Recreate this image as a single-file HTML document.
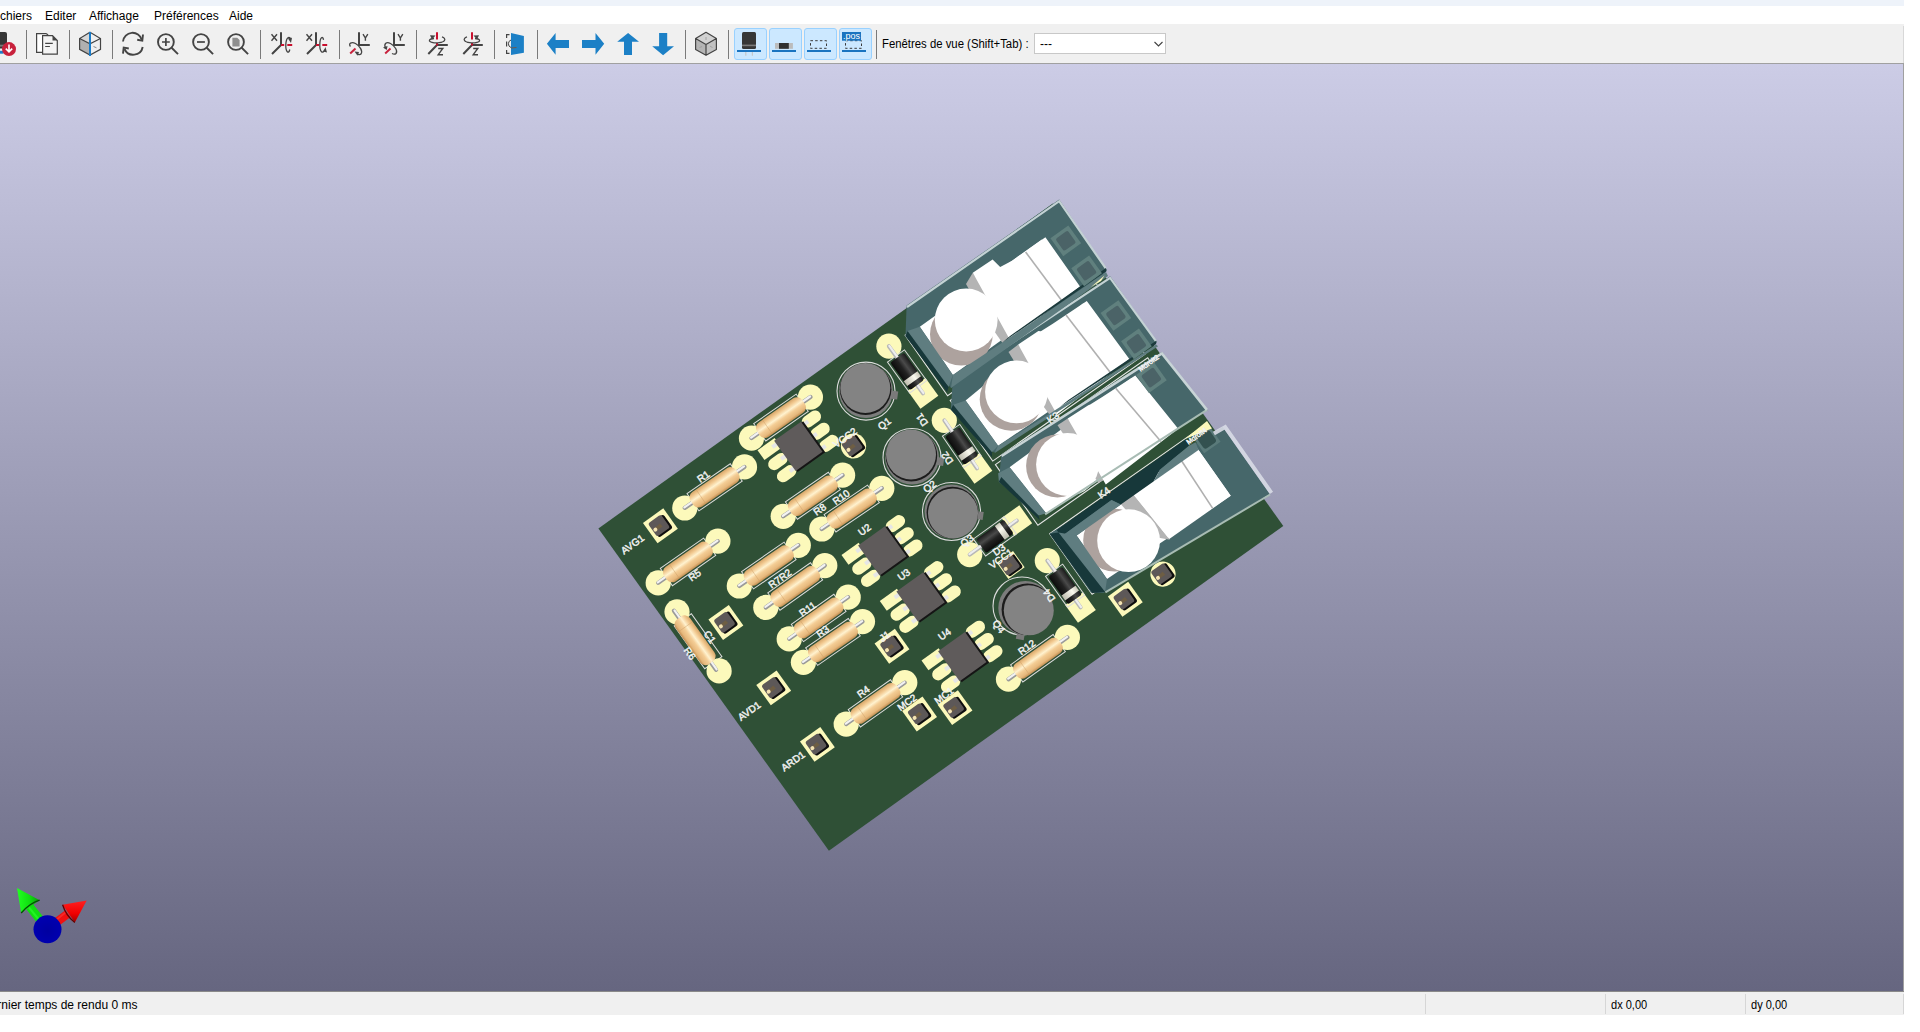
<!DOCTYPE html>
<html><head><meta charset="utf-8">
<style>
html,body{margin:0;padding:0;width:1920px;height:1032px;overflow:hidden;background:#fff;font-family:"Liberation Sans",sans-serif;color:#000}
.abs{position:absolute}
#strip{left:0;top:0;width:1904px;height:6px;background:#eef3fa}
#menu{left:0;top:6px;width:1904px;height:18px;background:#fff;font-size:12px}
#menu span{position:absolute;top:3px;white-space:nowrap}
#tb{left:0;top:24px;width:1904px;height:39px;background:#f0f0f0}
#tbline{left:0;top:63px;width:1904px;height:1px;background:#a0a0a0}
.sep{position:absolute;top:30px;width:1px;height:29px;background:#7a7a7a}
.tog{position:absolute;top:28px;width:31px;height:30px;background:#cce8ff;border:1px solid #99d1ff;border-radius:3px}
#vp{left:0;top:64px;width:1903px;height:927px;background:linear-gradient(#cccce6,#666680)}
#vpr{left:1903px;top:64px;width:1px;height:928px;background:#a0a0a0}
#tbr{left:1903px;top:26px;width:1px;height:37px;background:#d8d8d8}
#vpb{left:0;top:991px;width:1904px;height:1px;background:#8a8a8a}
#sb{left:0;top:992px;width:1904px;height:23px;background:#f0f0f0;font-size:12px}
.ssep{position:absolute;top:2px;width:1px;height:20px;background:#d6d6d6}
svg{position:absolute;overflow:visible}
</style></head><body>
<div class="abs" id="strip"></div>
<div class="abs" id="menu">
<span style="left:0px">chiers</span>
<span style="left:45px">Editer</span>
<span style="left:89px">Affichage</span>
<span style="left:154px">Préférences</span>
<span style="left:229px">Aide</span>
</div>
<div class="abs" id="tb"></div>
<div class="abs" id="tbline"></div>
<div class="sep" style="left:26px"></div>
<div class="sep" style="left:69px"></div>
<div class="sep" style="left:112px"></div>
<div class="sep" style="left:260px"></div>
<div class="sep" style="left:339px"></div>
<div class="sep" style="left:416px"></div>
<div class="sep" style="left:494px"></div>
<div class="sep" style="left:537px"></div>
<div class="sep" style="left:685px"></div>
<div class="sep" style="left:728px"></div>
<div class="sep" style="left:876px"></div>
<div class="tog" style="left:734px"></div>
<div class="tog" style="left:769px"></div>
<div class="tog" style="left:804px"></div>
<div class="tog" style="left:839px"></div>
<div class="abs" style="left:882px;top:37px;font-size:12px;white-space:nowrap;transform:scaleX(0.945);transform-origin:0 0">Fenêtres de vue (Shift+Tab) :</div>
<div class="abs" style="left:1034px;top:33px;width:132px;height:21px;background:#fff;border:1px solid #c8c8c8;box-sizing:border-box"></div>
<div class="abs" style="left:1040px;top:37px;font-size:12px">---</div>
<svg width="1920" height="64" style="left:0;top:0" viewBox="0 0 1920 64">
<g stroke-linecap="butt" fill="none">
<!-- printer export -->
<path d="M-4 32 H5 Q7 32 7 34 V48.5 H-4 Z" fill="#363636"/>
<rect x="-4" y="44.7" width="11" height="1.9" fill="#777"/>
<rect x="-4" y="50.8" width="7.5" height="2.9" fill="#1f7dc8"/>
<circle cx="9" cy="49.1" r="7" fill="#c8213c"/>
<path d="M9 44.5 V51.5 M5.8 48.6 L9 51.9 L12.2 48.6" stroke="#fff" stroke-width="1.6"/>
<!-- copy -->
<path d="M46.5 33.6 H36.6 V52.4 H42.5 M46.5 33.6 L48.2 35.5" stroke="#444" stroke-width="1.2" fill="#fff"/>
<path d="M42.6 35.6 H52.5 L57.3 40.5 V54.2 H42.6 Z" stroke="#444" stroke-width="1.2" fill="#f4f4f4"/>
<path d="M52.5 35.6 V40.5 H57.3 Z" fill="#444"/>
<path d="M45.2 43.4 H52.8 M45.2 46.5 H49.9" stroke="#444" stroke-width="1.1"/>
<!-- cube blue line -->
<path d="M90 32.3 L79.6 38.5 L90 43.8 Z" fill="#d8d8d8"/>
<path d="M79.6 38.5 L90 43.8 L90 55 L79.6 49.4 Z" fill="#b0b0b0"/>
<path d="M90 32.3 L100.5 38.5 L100.5 49.4 L90 55 L79.6 49.4 L79.6 38.5 Z M79.6 38.5 L90 43.8 L100.5 38.5" stroke="#444" stroke-width="1.2"/>
<path d="M93.5 46.5 L96.5 47.8" stroke="#888" stroke-width="1"/>
<path d="M90 32 V56" stroke="#1a7cc9" stroke-width="2"/>
<!-- refresh -->
<path d="M123 41.5 A9.6 9.6 0 0 1 141.8 39.8" stroke="#444" stroke-width="1.9"/>
<path d="M143 34.5 L142.3 40.6 L137.2 39.8" stroke="#444" stroke-width="1.9"/>
<path d="M142.7 47 A9.6 9.6 0 0 1 124.5 49" stroke="#444" stroke-width="1.9"/>
<path d="M123 53.7 L123.7 47.6 L128.8 48.5" stroke="#444" stroke-width="1.9"/>
<!-- zoom in/out/fit -->
<g stroke="#444" stroke-width="1.9">
<circle cx="165.9" cy="42" r="7.9"/><path d="M171.6 47.8 L178 54.1"/><path d="M162 42 H169.8 M165.9 38.1 V45.9" stroke-width="1.7"/>
<circle cx="201" cy="42" r="7.9"/><path d="M206.7 47.8 L213.1 54.1"/><path d="M197 42 H204.9" stroke-width="1.7"/>
<circle cx="236" cy="42" r="7.9"/><path d="M241.7 47.8 L248.1 54.1"/>
</g>
<path d="M232.4 37.7 H237.2 L239.6 40 V46.4 H232.4 Z" fill="#8e8e8e"/>
<!-- rotate X -->
<g id="rx">
<path d="M281 32.2 V45 L272 54" stroke="#444" stroke-width="2"/>
<path d="M271.5 34.2 L277 40.7 M277 34.2 L271.5 40.7" stroke="#444" stroke-width="1.4"/>
<path d="M281 45 H284.2 M287.3 45 H292.2" stroke="#c8102e" stroke-width="1.9"/>
<path d="M290.8 39.4 C289.5 36 286.3 36.5 285.8 44.5 C285.5 52 288.8 54.5 289.8 49.5" stroke="#444" stroke-width="1.3"/>
<path d="M287.8 38.3 L292 37.8 L291 43" fill="#444"/>
</g>
<g transform="translate(35 0)">
<path d="M281 32.2 V45 L272 54" stroke="#444" stroke-width="2"/>
<path d="M271.5 34.2 L277 40.7 M277 34.2 L271.5 40.7" stroke="#444" stroke-width="1.4"/>
<path d="M281 45 H284.2 M287.3 45 H292.2" stroke="#c8102e" stroke-width="1.9"/>
<path d="M288.5 39.8 C288 36 285 36.5 284.8 44.5 C284.5 52 288 54.5 289.8 49.5" stroke="#444" stroke-width="1.3"/>
<path d="M288.3 51.5 L292 52.5 L290.5 47" fill="#444"/>
</g>
<!-- rotate Y -->
<g>
<path d="M359 32.2 V45 H369.8" stroke="#444" stroke-width="2"/>
<path d="M363 34.2 L365.4 38 L367.8 34.2 M365.4 38 V40.8" stroke="#444" stroke-width="1.4"/>
<path d="M350.2 53.5 L355.5 48.5" stroke="#c8213c" stroke-width="2"/>
<path d="M350.5 46.5 C348 43.5 351.5 41.5 355.5 43.5 C360 46 363 51 361 54 C360 55 358 54.5 357.5 54" stroke="#444" stroke-width="1.3"/>
<path d="M354.5 51.5 L359 52 L357.5 55.8 Z" fill="#444"/>
</g>
<g>
<path d="M394 32.2 V45 H404.8" stroke="#444" stroke-width="2"/>
<path d="M398 34.2 L400.4 38 L402.8 34.2 M400.4 38 V40.8" stroke="#444" stroke-width="1.4"/>
<path d="M385.2 53.5 L390.5 48.5" stroke="#c8213c" stroke-width="2"/>
<path d="M385.5 48 C383.5 43.5 386.5 41.5 390.5 43.5 C395 46 398 51 396 53.5 C395 54.5 393 54 392 53.5" stroke="#444" stroke-width="1.3"/>
<path d="M383 47.5 L387.5 46 L386.8 50 Z" fill="#444"/>
</g>
<!-- rotate Z -->
<g>
<path d="M437 45 H447.8 M437 45 L428.3 54" stroke="#444" stroke-width="2"/>
<path d="M437 32.2 V39.5 M437 43 V45.5" stroke="#c8102e" stroke-width="2"/>
<path d="M434 38.5 C428 39 428.5 41.5 432 42.3 C436 43.5 443 42.8 444.5 40.5 C445.5 39 444 37.5 442 36.8" stroke="#444" stroke-width="1.3"/>
<path d="M430 35.2 L435.5 35.5 L432 39.5 Z" fill="#444"/>
<path d="M438.2 48.5 H442.8 L438.2 54.7 H443" stroke="#444" stroke-width="1.4"/>
</g>
<g transform="translate(35 0)">
<path d="M437 45 H447.8 M437 45 L428.3 54" stroke="#444" stroke-width="2"/>
<path d="M437 32.2 V39.5 M437 43 V45.5" stroke="#c8102e" stroke-width="2"/>
<path d="M440 38.5 C446 39 445.5 41.5 442 42.3 C438 43.5 431 42.8 429.5 40.5 C428.5 39 430 37.5 432 36.8" stroke="#444" stroke-width="1.3"/>
<path d="M444 35.2 L438.5 35.5 L442 39.5 Z" fill="#444"/>
<path d="M438.2 48.5 H442.8 L438.2 54.7 H443" stroke="#444" stroke-width="1.4"/>
</g>
<!-- flip board -->
<path d="M511 33 L523.9 36.1 V52.8 L511 55 Z" fill="#1c80c6"/>
<path d="M509.5 34.7 H506.6 V38 M506.6 41.5 V46.5 M506.6 50 V53.3 H509.5" stroke="#444" stroke-width="1.2"/>
<path d="M511 40 A4 4 0 0 0 511 47.5" stroke="#444" stroke-width="1"/>
<path d="M511 48 L516.5 47.5" stroke="#6a5a50" stroke-width="1.2"/>
<!-- arrows -->
<path d="M546.9 43.8 L555.6 33.1 V40 H569 V48 H555.6 V54.7 Z" fill="#1c80c6"/>
<path d="M604.2 43.8 L595.5 33.1 V40 H582 V48 H595.5 V54.7 Z" fill="#1c80c6"/>
<path d="M628.1 33 L639 41.8 H632 V54.9 H624 V41.8 H617.2 Z" fill="#1c80c6"/>
<path d="M663.1 55.2 L674 46.3 H667.2 V33.1 H659.1 V46.3 H652.2 Z" fill="#1c80c6"/>
<!-- gray cube -->
<path d="M706 32.3 L716.4 38.5 L706 44.4 L695.6 38.5 Z" fill="#d2d2d2"/>
<path d="M695.6 38.5 L706 44.4 V55.3 L695.6 49.4 Z" fill="#b4b4b4"/>
<path d="M716.4 38.5 L706 44.4 V55.3 L716.4 49.4 Z" fill="#c2c2c2"/>
<path d="M706 32.3 L716.4 38.5 V49.4 L706 55.3 L695.6 49.4 V38.5 Z M695.6 38.5 L706 44.4 L716.4 38.5 M706 44.4 V55.3" stroke="#444" stroke-width="1.2" stroke-linejoin="round"/>
<path d="M706 37 V40 M699.5 47.5 L702 46.5 M710 46.2 L712.5 47.5" stroke="#999" stroke-width="0.8"/>
<!-- toggles -->
<rect x="742" y="31.9" width="14" height="17.1" rx="1.5" fill="#363636"/>
<rect x="742" y="44.6" width="14" height="1.6" fill="#7a7a7a"/>
<path d="M745.8 51 V55.8 M752.4 51 V55.8" stroke="#c8c8c8" stroke-width="1.2"/>
<rect x="737" y="50" width="24" height="2" fill="#1a74c0"/>
<rect x="775" y="43" width="17.9" height="5.8" fill="#bcbcbc"/>
<rect x="779" y="43" width="9.8" height="5.8" fill="#303030"/>
<rect x="772" y="50" width="24" height="2" fill="#1a74c0"/>
<rect x="810.5" y="40.7" width="16" height="7.6" stroke="#3a3a3a" stroke-width="1" stroke-dasharray="2.5 2.2"/>
<rect x="807" y="50" width="24" height="2" fill="#1a74c0"/>
<rect x="845.5" y="40.7" width="16" height="7.6" stroke="#3a3a3a" stroke-width="1" stroke-dasharray="2.5 2.2"/>
<rect x="842" y="32" width="19" height="8.7" fill="#1a74c0"/>
<text x="851.5" y="39.3" font-family="Liberation Sans" font-size="9" fill="#fff" text-anchor="middle">.pos</text>
<rect x="842" y="50" width="24" height="2" fill="#1a74c0"/>
<!-- combo arrow -->
<path d="M1154.5 42 L1158.5 46 L1162.5 42" stroke="#404040" stroke-width="1.1"/>
</g>
</svg>

<div class="abs" id="vp"></div>
<div class="abs" id="vpr"></div><div class="abs" id="tbr"></div>
<div class="abs" id="vpb"></div>
<!--PCB--><svg width="1920" height="1032" style="left:0;top:0" viewBox="0 0 1920 1032">
<defs>
<linearGradient id="resg" x1="0" y1="0" x2="0" y2="1">
<stop offset="0" stop-color="#d6a66a"/><stop offset="0.2" stop-color="#f2c990"/><stop offset="0.42" stop-color="#fff2cf"/><stop offset="0.6" stop-color="#f4cd95"/><stop offset="0.85" stop-color="#e6b87c"/><stop offset="1" stop-color="#c08c52"/>
</linearGradient>
<linearGradient id="bandg" x1="0" y1="0" x2="0" y2="1"><stop offset="0" stop-color="#c8c6b8"/><stop offset="0.35" stop-color="#fbfaf0"/><stop offset="1" stop-color="#bdbbad"/></linearGradient>
<linearGradient id="diog" x1="0" y1="0" x2="0" y2="1">
<stop offset="0" stop-color="#1a1a1a"/><stop offset="0.35" stop-color="#4a4a4a"/><stop offset="0.6" stop-color="#222"/><stop offset="1" stop-color="#0c0c0c"/>
</linearGradient>
</defs>
<polygon points="598.4,528.4 1052.8,203.6 1283.3,525.9 828.9,850.7" fill="#2f5036"/>
<g transform="translate(660.4 525.8) rotate(-35.6)"><rect x="-12.5" y="-12.5" width="25" height="25" fill="#fcf9bb"/><rect x="-8" y="-8" width="17" height="17" rx="2.5" fill="#0e0e0e"/><rect x="-9" y="-9" width="16" height="16" rx="2.5" fill="#5d5858"/><path d="M-6.5 -1.5 L1 -2.2 L1.5 1.8 L-6.5 1.8 Z" fill="#6e5e44"/><circle cx="-6.3" cy="0.2" r="2" fill="#f3e2b2"/></g>
<g transform="translate(725.9 622.5) rotate(-35.6)"><rect x="-12.5" y="-12.5" width="25" height="25" fill="#fcf9bb"/><rect x="-8" y="-8" width="17" height="17" rx="2.5" fill="#0e0e0e"/><rect x="-9" y="-9" width="16" height="16" rx="2.5" fill="#5d5858"/><path d="M-6.5 -1.5 L1 -2.2 L1.5 1.8 L-6.5 1.8 Z" fill="#6e5e44"/><circle cx="-6.3" cy="0.2" r="2" fill="#f3e2b2"/></g>
<g transform="translate(773.7 687.9) rotate(-35.6)"><rect x="-12.5" y="-12.5" width="25" height="25" fill="#fcf9bb"/><rect x="-8" y="-8" width="17" height="17" rx="2.5" fill="#0e0e0e"/><rect x="-9" y="-9" width="16" height="16" rx="2.5" fill="#5d5858"/><path d="M-6.5 -1.5 L1 -2.2 L1.5 1.8 L-6.5 1.8 Z" fill="#6e5e44"/><circle cx="-6.3" cy="0.2" r="2" fill="#f3e2b2"/></g>
<g transform="translate(817.4 744.4) rotate(-35.6)"><rect x="-12.5" y="-12.5" width="25" height="25" fill="#fcf9bb"/><rect x="-8" y="-8" width="17" height="17" rx="2.5" fill="#0e0e0e"/><rect x="-9" y="-9" width="16" height="16" rx="2.5" fill="#5d5858"/><path d="M-6.5 -1.5 L1 -2.2 L1.5 1.8 L-6.5 1.8 Z" fill="#6e5e44"/><circle cx="-6.3" cy="0.2" r="2" fill="#f3e2b2"/></g>
<g transform="translate(892 646.3) rotate(-35.6)"><rect x="-12.5" y="-12.5" width="25" height="25" fill="#fcf9bb"/><rect x="-8" y="-8" width="17" height="17" rx="2.5" fill="#0e0e0e"/><rect x="-9" y="-9" width="16" height="16" rx="2.5" fill="#5d5858"/><path d="M-6.5 -1.5 L1 -2.2 L1.5 1.8 L-6.5 1.8 Z" fill="#6e5e44"/><circle cx="-6.3" cy="0.2" r="2" fill="#f3e2b2"/></g>
<g transform="translate(919.6 714) rotate(-35.6)"><rect x="-12.5" y="-12.5" width="25" height="25" fill="#fcf9bb"/><rect x="-8" y="-8" width="17" height="17" rx="2.5" fill="#0e0e0e"/><rect x="-9" y="-9" width="16" height="16" rx="2.5" fill="#5d5858"/><path d="M-6.5 -1.5 L1 -2.2 L1.5 1.8 L-6.5 1.8 Z" fill="#6e5e44"/><circle cx="-6.3" cy="0.2" r="2" fill="#f3e2b2"/></g>
<g transform="translate(955 707.6) rotate(-35.6)"><rect x="-12.5" y="-12.5" width="25" height="25" fill="#fcf9bb"/><rect x="-8" y="-8" width="17" height="17" rx="2.5" fill="#0e0e0e"/><rect x="-9" y="-9" width="16" height="16" rx="2.5" fill="#5d5858"/><path d="M-6.5 -1.5 L1 -2.2 L1.5 1.8 L-6.5 1.8 Z" fill="#6e5e44"/><circle cx="-6.3" cy="0.2" r="2" fill="#f3e2b2"/></g>
<g transform="translate(1125.3 599.3) rotate(-35.6)"><rect x="-12.5" y="-12.5" width="25" height="25" fill="#fcf9bb"/><rect x="-8" y="-8" width="17" height="17" rx="2.5" fill="#0e0e0e"/><rect x="-9" y="-9" width="16" height="16" rx="2.5" fill="#5d5858"/><path d="M-6.5 -1.5 L1 -2.2 L1.5 1.8 L-6.5 1.8 Z" fill="#6e5e44"/><circle cx="-6.3" cy="0.2" r="2" fill="#f3e2b2"/></g>
<g transform="translate(853.5 446) rotate(-35.6)"><circle r="12.6" fill="#fcf9bb"/><rect x="-8" y="-8" width="17" height="17" rx="2.5" fill="#0e0e0e"/><rect x="-9" y="-9" width="16" height="16" rx="2.5" fill="#5d5858"/><path d="M-6.5 -1.5 L1 -2.2 L1.5 1.8 L-6.5 1.8 Z" fill="#6e5e44"/><circle cx="-6.3" cy="0.2" r="2" fill="#f3e2b2"/></g>
<g transform="translate(1163 574.1) rotate(-35.6)"><circle r="12.6" fill="#fcf9bb"/><rect x="-8" y="-8" width="17" height="17" rx="2.5" fill="#0e0e0e"/><rect x="-9" y="-9" width="16" height="16" rx="2.5" fill="#5d5858"/><path d="M-6.5 -1.5 L1 -2.2 L1.5 1.8 L-6.5 1.8 Z" fill="#6e5e44"/><circle cx="-6.3" cy="0.2" r="2" fill="#f3e2b2"/></g>
<g transform="translate(1010.7 565) rotate(-35.6)"><rect x="-10" y="-10" width="20" height="20" fill="#fcf9bb"/><rect x="-8" y="-8" width="17" height="17" rx="2.5" fill="#0e0e0e"/><rect x="-9" y="-9" width="16" height="16" rx="2.5" fill="#5d5858"/><path d="M-6.5 -1.5 L1 -2.2 L1.5 1.8 L-6.5 1.8 Z" fill="#6e5e44"/><circle cx="-6.3" cy="0.2" r="2" fill="#f3e2b2"/></g>
<g transform="translate(714.6 487.4) rotate(-34.5)"><rect x="-26.2" y="-10.6" width="52.5" height="21.1" fill="none" stroke="#dcdcdc" stroke-width="1"/></g>
<circle cx="684.8" cy="508" r="12.6" fill="#fcf9bb"/>
<circle cx="744.5" cy="466.9" r="12.6" fill="#fcf9bb"/>
<g transform="translate(714.6 487.4) rotate(-34.5)"><line x1="-36.2" y1="0" x2="36.2" y2="0" stroke="#9a9a9a" stroke-width="4.2" stroke-linecap="round"/><line x1="-36.2" y1="-0.7" x2="36.2" y2="-0.7" stroke="#f2f2f2" stroke-width="2.2" stroke-linecap="round"/><rect x="-27.5" y="-8.8" width="55" height="17.5" rx="6.5" fill="url(#resg)"/><line x1="-16.5" y1="-7.8" x2="-16.5" y2="7.8" stroke="#c89a60" stroke-opacity="0.5" stroke-width="0.8"/></g>
<g transform="translate(781 417.6) rotate(-34.9)"><rect x="-25.9" y="-10.6" width="51.8" height="21.1" fill="none" stroke="#dcdcdc" stroke-width="1"/></g>
<circle cx="751.5" cy="438.2" r="12.6" fill="#fcf9bb"/>
<circle cx="810.4" cy="397.1" r="12.6" fill="#fcf9bb"/>
<g transform="translate(781 417.6) rotate(-34.9)"><line x1="-35.9" y1="0" x2="35.9" y2="0" stroke="#9a9a9a" stroke-width="4.2" stroke-linecap="round"/><line x1="-35.9" y1="-0.7" x2="35.9" y2="-0.7" stroke="#f2f2f2" stroke-width="2.2" stroke-linecap="round"/><rect x="-27.5" y="-8.8" width="55" height="17.5" rx="6.5" fill="url(#resg)"/><line x1="-16.5" y1="-7.8" x2="-16.5" y2="7.8" stroke="#c89a60" stroke-opacity="0.5" stroke-width="0.8"/></g>
<g transform="translate(688 562) rotate(-35)"><rect x="-26.4" y="-10.6" width="52.9" height="21.1" fill="none" stroke="#dcdcdc" stroke-width="1"/></g>
<circle cx="658.2" cy="582.9" r="12.6" fill="#fcf9bb"/>
<circle cx="717.9" cy="541.1" r="12.6" fill="#fcf9bb"/>
<g transform="translate(688 562) rotate(-35)"><line x1="-36.4" y1="0" x2="36.4" y2="0" stroke="#9a9a9a" stroke-width="4.2" stroke-linecap="round"/><line x1="-36.4" y1="-0.7" x2="36.4" y2="-0.7" stroke="#f2f2f2" stroke-width="2.2" stroke-linecap="round"/><rect x="-27.5" y="-8.8" width="55" height="17.5" rx="6.5" fill="url(#resg)"/><line x1="-16.5" y1="-7.8" x2="-16.5" y2="7.8" stroke="#c89a60" stroke-opacity="0.5" stroke-width="0.8"/></g>
<g transform="translate(812.9 495.8) rotate(-34.7)"><rect x="-26.1" y="-10.6" width="52.2" height="21.1" fill="none" stroke="#dcdcdc" stroke-width="1"/></g>
<circle cx="783.2" cy="516.3" r="12.6" fill="#fcf9bb"/>
<circle cx="842.6" cy="475.2" r="12.6" fill="#fcf9bb"/>
<g transform="translate(812.9 495.8) rotate(-34.7)"><line x1="-36.1" y1="0" x2="36.1" y2="0" stroke="#9a9a9a" stroke-width="4.2" stroke-linecap="round"/><line x1="-36.1" y1="-0.7" x2="36.1" y2="-0.7" stroke="#f2f2f2" stroke-width="2.2" stroke-linecap="round"/><rect x="-27.5" y="-8.8" width="55" height="17.5" rx="6.5" fill="url(#resg)"/><line x1="-16.5" y1="-7.8" x2="-16.5" y2="7.8" stroke="#c89a60" stroke-opacity="0.5" stroke-width="0.8"/></g>
<g transform="translate(851.8 508.6) rotate(-34.2)"><rect x="-26.3" y="-10.6" width="52.5" height="21.1" fill="none" stroke="#dcdcdc" stroke-width="1"/></g>
<circle cx="821.8" cy="529" r="12.6" fill="#fcf9bb"/>
<circle cx="881.8" cy="488.3" r="12.6" fill="#fcf9bb"/>
<g transform="translate(851.8 508.6) rotate(-34.2)"><line x1="-36.3" y1="0" x2="36.3" y2="0" stroke="#9a9a9a" stroke-width="4.2" stroke-linecap="round"/><line x1="-36.3" y1="-0.7" x2="36.3" y2="-0.7" stroke="#f2f2f2" stroke-width="2.2" stroke-linecap="round"/><rect x="-27.5" y="-8.8" width="55" height="17.5" rx="6.5" fill="url(#resg)"/><line x1="-16.5" y1="-7.8" x2="-16.5" y2="7.8" stroke="#c89a60" stroke-opacity="0.5" stroke-width="0.8"/></g>
<g transform="translate(768.8 565.6) rotate(-34.6)"><rect x="-25.8" y="-10.6" width="51.7" height="21.1" fill="none" stroke="#dcdcdc" stroke-width="1"/></g>
<circle cx="739.3" cy="586" r="12.6" fill="#fcf9bb"/>
<circle cx="798.3" cy="545.3" r="12.6" fill="#fcf9bb"/>
<g transform="translate(768.8 565.6) rotate(-34.6)"><line x1="-35.8" y1="0" x2="35.8" y2="0" stroke="#9a9a9a" stroke-width="4.2" stroke-linecap="round"/><line x1="-35.8" y1="-0.7" x2="35.8" y2="-0.7" stroke="#f2f2f2" stroke-width="2.2" stroke-linecap="round"/><rect x="-27.5" y="-8.8" width="55" height="17.5" rx="6.5" fill="url(#resg)"/><line x1="-16.5" y1="-7.8" x2="-16.5" y2="7.8" stroke="#c89a60" stroke-opacity="0.5" stroke-width="0.8"/></g>
<g transform="translate(795.3 586.5) rotate(-35.3)"><rect x="-26.2" y="-10.6" width="52.3" height="21.1" fill="none" stroke="#dcdcdc" stroke-width="1"/></g>
<circle cx="765.8" cy="607.4" r="12.6" fill="#fcf9bb"/>
<circle cx="824.8" cy="565.6" r="12.6" fill="#fcf9bb"/>
<g transform="translate(795.3 586.5) rotate(-35.3)"><line x1="-36.2" y1="0" x2="36.2" y2="0" stroke="#9a9a9a" stroke-width="4.2" stroke-linecap="round"/><line x1="-36.2" y1="-0.7" x2="36.2" y2="-0.7" stroke="#f2f2f2" stroke-width="2.2" stroke-linecap="round"/><rect x="-27.5" y="-8.8" width="55" height="17.5" rx="6.5" fill="url(#resg)"/><line x1="-16.5" y1="-7.8" x2="-16.5" y2="7.8" stroke="#c89a60" stroke-opacity="0.5" stroke-width="0.8"/></g>
<g transform="translate(818.7 618) rotate(-35.3)"><rect x="-26.1" y="-10.6" width="52.2" height="21.1" fill="none" stroke="#dcdcdc" stroke-width="1"/></g>
<circle cx="789.2" cy="638.9" r="12.6" fill="#fcf9bb"/>
<circle cx="848.2" cy="597.2" r="12.6" fill="#fcf9bb"/>
<g transform="translate(818.7 618) rotate(-35.3)"><line x1="-36.1" y1="0" x2="36.1" y2="0" stroke="#9a9a9a" stroke-width="4.2" stroke-linecap="round"/><line x1="-36.1" y1="-0.7" x2="36.1" y2="-0.7" stroke="#f2f2f2" stroke-width="2.2" stroke-linecap="round"/><rect x="-27.5" y="-8.8" width="55" height="17.5" rx="6.5" fill="url(#resg)"/><line x1="-16.5" y1="-7.8" x2="-16.5" y2="7.8" stroke="#c89a60" stroke-opacity="0.5" stroke-width="0.8"/></g>
<g transform="translate(833 642) rotate(-34.6)"><rect x="-25.9" y="-10.6" width="51.8" height="21.1" fill="none" stroke="#dcdcdc" stroke-width="1"/></g>
<circle cx="803.4" cy="662.3" r="12.6" fill="#fcf9bb"/>
<circle cx="862.5" cy="621.6" r="12.6" fill="#fcf9bb"/>
<g transform="translate(833 642) rotate(-34.6)"><line x1="-35.9" y1="0" x2="35.9" y2="0" stroke="#9a9a9a" stroke-width="4.2" stroke-linecap="round"/><line x1="-35.9" y1="-0.7" x2="35.9" y2="-0.7" stroke="#f2f2f2" stroke-width="2.2" stroke-linecap="round"/><rect x="-27.5" y="-8.8" width="55" height="17.5" rx="6.5" fill="url(#resg)"/><line x1="-16.5" y1="-7.8" x2="-16.5" y2="7.8" stroke="#c89a60" stroke-opacity="0.5" stroke-width="0.8"/></g>
<g transform="translate(875.5 703.4) rotate(-35.3)"><rect x="-25.9" y="-10.6" width="51.8" height="21.1" fill="none" stroke="#dcdcdc" stroke-width="1"/></g>
<circle cx="846.2" cy="724.1" r="12.6" fill="#fcf9bb"/>
<circle cx="904.8" cy="682.6" r="12.6" fill="#fcf9bb"/>
<g transform="translate(875.5 703.4) rotate(-35.3)"><line x1="-35.9" y1="0" x2="35.9" y2="0" stroke="#9a9a9a" stroke-width="4.2" stroke-linecap="round"/><line x1="-35.9" y1="-0.7" x2="35.9" y2="-0.7" stroke="#f2f2f2" stroke-width="2.2" stroke-linecap="round"/><rect x="-27.5" y="-8.8" width="55" height="17.5" rx="6.5" fill="url(#resg)"/><line x1="-16.5" y1="-7.8" x2="-16.5" y2="7.8" stroke="#c89a60" stroke-opacity="0.5" stroke-width="0.8"/></g>
<g transform="translate(1038 658.3) rotate(-35.4)"><rect x="-26.1" y="-10.6" width="52.2" height="21.1" fill="none" stroke="#dcdcdc" stroke-width="1"/></g>
<circle cx="1008.5" cy="679.2" r="12.6" fill="#fcf9bb"/>
<circle cx="1067.4" cy="637.4" r="12.6" fill="#fcf9bb"/>
<g transform="translate(1038 658.3) rotate(-35.4)"><line x1="-36.1" y1="0" x2="36.1" y2="0" stroke="#9a9a9a" stroke-width="4.2" stroke-linecap="round"/><line x1="-36.1" y1="-0.7" x2="36.1" y2="-0.7" stroke="#f2f2f2" stroke-width="2.2" stroke-linecap="round"/><rect x="-27.5" y="-8.8" width="55" height="17.5" rx="6.5" fill="url(#resg)"/><line x1="-16.5" y1="-7.8" x2="-16.5" y2="7.8" stroke="#c89a60" stroke-opacity="0.5" stroke-width="0.8"/></g>
<g transform="translate(698 641.3) rotate(54.5)"><rect x="-26.3" y="-10.6" width="52.6" height="21.1" fill="none" stroke="#dcdcdc" stroke-width="1"/></g>
<circle cx="677" cy="611.8" r="12.6" fill="#fcf9bb"/>
<circle cx="719.1" cy="670.9" r="12.6" fill="#fcf9bb"/>
<g transform="translate(695 640.3) rotate(54.5)"><line x1="-36.3" y1="0" x2="36.3" y2="0" stroke="#9a9a9a" stroke-width="4.2" stroke-linecap="round"/><line x1="-36.3" y1="-0.7" x2="36.3" y2="-0.7" stroke="#f2f2f2" stroke-width="2.2" stroke-linecap="round"/><rect x="-27.5" y="-8.8" width="55" height="17.5" rx="6.5" fill="url(#resg)"/><line x1="-16.5" y1="-7.8" x2="-16.5" y2="7.8" stroke="#c89a60" stroke-opacity="0.5" stroke-width="0.8"/></g>
<g transform="translate(799 446.4) rotate(-35.6)"><rect x="-36" y="-21" width="21" height="12" fill="#fcf9bb"/><rect x="-22" y="-17" width="6" height="4" fill="#e6e6e6"/><rect x="-36.5" y="-6" width="21" height="12" rx="6" fill="#fcf9bb"/><rect x="-22" y="-2" width="6" height="4" fill="#e6e6e6"/><rect x="-36.5" y="9" width="21" height="12" rx="6" fill="#fcf9bb"/><rect x="-22" y="13" width="6" height="4" fill="#e6e6e6"/><rect x="15.5" y="-21" width="21" height="12" rx="6" fill="#fcf9bb"/><rect x="16" y="-17" width="6" height="4" fill="#e6e6e6"/><rect x="15.5" y="-6" width="21" height="12" rx="6" fill="#fcf9bb"/><rect x="16" y="-2" width="6" height="4" fill="#e6e6e6"/><rect x="15.5" y="9" width="21" height="12" rx="6" fill="#fcf9bb"/><rect x="16" y="13" width="6" height="4" fill="#e6e6e6"/><rect x="-16" y="-18" width="34" height="38" fill="#151515"/><rect x="-17" y="-19" width="33" height="37" fill="#5f5b5b"/></g>
<g transform="translate(883 551) rotate(-35.6)"><rect x="-36" y="-21" width="21" height="12" fill="#fcf9bb"/><rect x="-22" y="-17" width="6" height="4" fill="#e6e6e6"/><rect x="-36.5" y="-6" width="21" height="12" rx="6" fill="#fcf9bb"/><rect x="-22" y="-2" width="6" height="4" fill="#e6e6e6"/><rect x="-36.5" y="9" width="21" height="12" rx="6" fill="#fcf9bb"/><rect x="-22" y="13" width="6" height="4" fill="#e6e6e6"/><rect x="15.5" y="-21" width="21" height="12" rx="6" fill="#fcf9bb"/><rect x="16" y="-17" width="6" height="4" fill="#e6e6e6"/><rect x="15.5" y="-6" width="21" height="12" rx="6" fill="#fcf9bb"/><rect x="16" y="-2" width="6" height="4" fill="#e6e6e6"/><rect x="15.5" y="9" width="21" height="12" rx="6" fill="#fcf9bb"/><rect x="16" y="13" width="6" height="4" fill="#e6e6e6"/><rect x="-16" y="-18" width="34" height="38" fill="#151515"/><rect x="-17" y="-19" width="33" height="37" fill="#5f5b5b"/></g>
<g transform="translate(921.3 597) rotate(-35.6)"><rect x="-36" y="-21" width="21" height="12" fill="#fcf9bb"/><rect x="-22" y="-17" width="6" height="4" fill="#e6e6e6"/><rect x="-36.5" y="-6" width="21" height="12" rx="6" fill="#fcf9bb"/><rect x="-22" y="-2" width="6" height="4" fill="#e6e6e6"/><rect x="-36.5" y="9" width="21" height="12" rx="6" fill="#fcf9bb"/><rect x="-22" y="13" width="6" height="4" fill="#e6e6e6"/><rect x="15.5" y="-21" width="21" height="12" rx="6" fill="#fcf9bb"/><rect x="16" y="-17" width="6" height="4" fill="#e6e6e6"/><rect x="15.5" y="-6" width="21" height="12" rx="6" fill="#fcf9bb"/><rect x="16" y="-2" width="6" height="4" fill="#e6e6e6"/><rect x="15.5" y="9" width="21" height="12" rx="6" fill="#fcf9bb"/><rect x="16" y="13" width="6" height="4" fill="#e6e6e6"/><rect x="-16" y="-18" width="34" height="38" fill="#151515"/><rect x="-17" y="-19" width="33" height="37" fill="#5f5b5b"/></g>
<g transform="translate(963 656.7) rotate(-35.6)"><rect x="-36" y="-21" width="21" height="12" fill="#fcf9bb"/><rect x="-22" y="-17" width="6" height="4" fill="#e6e6e6"/><rect x="-36.5" y="-6" width="21" height="12" rx="6" fill="#fcf9bb"/><rect x="-22" y="-2" width="6" height="4" fill="#e6e6e6"/><rect x="-36.5" y="9" width="21" height="12" rx="6" fill="#fcf9bb"/><rect x="-22" y="13" width="6" height="4" fill="#e6e6e6"/><rect x="15.5" y="-21" width="21" height="12" rx="6" fill="#fcf9bb"/><rect x="16" y="-17" width="6" height="4" fill="#e6e6e6"/><rect x="15.5" y="-6" width="21" height="12" rx="6" fill="#fcf9bb"/><rect x="16" y="-2" width="6" height="4" fill="#e6e6e6"/><rect x="15.5" y="9" width="21" height="12" rx="6" fill="#fcf9bb"/><rect x="16" y="13" width="6" height="4" fill="#e6e6e6"/><rect x="-16" y="-18" width="34" height="38" fill="#151515"/><rect x="-17" y="-19" width="33" height="37" fill="#5f5b5b"/></g>
<circle cx="888.9" cy="346.2" r="12.6" fill="#fcf9bb"/>
<g transform="translate(923 393.3) rotate(-35.6)"><rect x="-11" y="-11" width="22" height="22" fill="#fcf9bb"/></g>
<g transform="translate(907.1 371.4) rotate(54.1)"><rect x="-19" y="-10.5" width="38" height="21" fill="none" stroke="#dcdcdc" stroke-width="1"/><line x1="-31.1" y1="0" x2="27.1" y2="0" stroke="#b8b8b8" stroke-width="4" stroke-linecap="round"/><line x1="-31.1" y1="-0.6" x2="27.1" y2="-0.6" stroke="#eeeeee" stroke-width="2.2" stroke-linecap="round"/><rect x="-17" y="-8.5" width="34" height="17" rx="2" fill="url(#diog)"/><rect x="6" y="-8.5" width="6" height="17" fill="url(#bandg)"/></g>
<circle cx="944.3" cy="420.3" r="12.6" fill="#fcf9bb"/>
<g transform="translate(977 468.3) rotate(-35.6)"><rect x="-11" y="-11" width="22" height="22" fill="#fcf9bb"/></g>
<g transform="translate(961.8 446) rotate(55.7)"><rect x="-19" y="-10.5" width="38" height="21" fill="none" stroke="#dcdcdc" stroke-width="1"/><line x1="-31" y1="0" x2="27" y2="0" stroke="#b8b8b8" stroke-width="4" stroke-linecap="round"/><line x1="-31" y1="-0.6" x2="27" y2="-0.6" stroke="#eeeeee" stroke-width="2.2" stroke-linecap="round"/><rect x="-17" y="-8.5" width="34" height="17" rx="2" fill="url(#diog)"/><rect x="6" y="-8.5" width="6" height="17" fill="url(#bandg)"/></g>
<circle cx="969.7" cy="554.6" r="12.6" fill="#fcf9bb"/>
<g transform="translate(1016.8 520.6) rotate(-35.6)"><rect x="-11" y="-11" width="22" height="22" fill="#fcf9bb"/></g>
<g transform="translate(994.9 536.4) rotate(-35.8)"><rect x="-19" y="-10.5" width="38" height="21" fill="none" stroke="#dcdcdc" stroke-width="1"/><line x1="-31" y1="0" x2="27" y2="0" stroke="#b8b8b8" stroke-width="4" stroke-linecap="round"/><line x1="-31" y1="-0.6" x2="27" y2="-0.6" stroke="#eeeeee" stroke-width="2.2" stroke-linecap="round"/><rect x="-17" y="-8.5" width="34" height="17" rx="2" fill="url(#diog)"/><rect x="6" y="-8.5" width="6" height="17" fill="url(#bandg)"/></g>
<circle cx="1047.3" cy="560.7" r="12.6" fill="#fcf9bb"/>
<g transform="translate(1080.5 607.5) rotate(-35.6)"><rect x="-11" y="-11" width="22" height="22" fill="#fcf9bb"/></g>
<g transform="translate(1065.1 585.7) rotate(54.6)"><rect x="-19" y="-10.5" width="38" height="21" fill="none" stroke="#dcdcdc" stroke-width="1"/><line x1="-30.7" y1="0" x2="26.7" y2="0" stroke="#b8b8b8" stroke-width="4" stroke-linecap="round"/><line x1="-30.7" y1="-0.6" x2="26.7" y2="-0.6" stroke="#eeeeee" stroke-width="2.2" stroke-linecap="round"/><rect x="-17" y="-8.5" width="34" height="17" rx="2" fill="url(#diog)"/><rect x="6" y="-8.5" width="6" height="17" fill="url(#bandg)"/></g>
<circle cx="866" cy="391.1" r="29" fill="none" stroke="#dcdcdc" stroke-width="1.1"/>
<g transform="translate(866 391.1) rotate(8)"><rect x="26" y="-4" width="6" height="8" fill="#7a7a7a"/></g>
<circle cx="866" cy="391.1" r="27" fill="#7c7c7c"/>
<circle cx="865.6" cy="389.2" r="25.8" fill="#1c1c1c"/>
<circle cx="865.3" cy="388" r="25" fill="#838383"/>
<circle cx="912" cy="457.5" r="29" fill="none" stroke="#dcdcdc" stroke-width="1.1"/>
<g transform="translate(912 457.5) rotate(8)"><rect x="26" y="-4" width="6" height="8" fill="#7a7a7a"/></g>
<circle cx="912" cy="457.5" r="27" fill="#7c7c7c"/>
<circle cx="911.4" cy="455.7" r="25.8" fill="#1c1c1c"/>
<circle cx="911" cy="454.5" r="25" fill="#838383"/>
<circle cx="951.5" cy="511.5" r="29" fill="none" stroke="#dcdcdc" stroke-width="1.1"/>
<g transform="translate(951.5 511.5) rotate(8)"><rect x="26" y="-4" width="6" height="8" fill="#7a7a7a"/></g>
<circle cx="951.5" cy="511.5" r="27" fill="#7c7c7c"/>
<circle cx="952.4" cy="512.6" r="25.8" fill="#1c1c1c"/>
<circle cx="953" cy="513.4" r="25" fill="#838383"/>
<circle cx="1022" cy="606" r="29" fill="none" stroke="#dcdcdc" stroke-width="1.1"/>
<g transform="translate(1025.3 608) rotate(100)"><rect x="26" y="-4" width="6" height="8" fill="#7a7a7a"/></g>
<circle cx="1025.3" cy="608" r="27" fill="#7c7c7c"/>
<circle cx="1027.4" cy="609.4" r="25.8" fill="#1c1c1c"/>
<circle cx="1028.8" cy="610.3" r="25" fill="#838383"/>
<polygon points="905.1,335.1 1057.4,228.3 1099.9,288.8 947.6,395.7" fill="none" stroke="#e6e6e6" stroke-width="1.1"/>
<polygon points="950.2,400.5 1102.5,293.7 1145,354.2 992.7,461.1" fill="none" stroke="#e6e6e6" stroke-width="1.1"/>
<polygon points="995.4,464.6 1147.7,357.8 1190.2,418.3 1037.9,525.2" fill="none" stroke="#e6e6e6" stroke-width="1.1"/>
<polygon points="1049.6,533.7 1201.9,426.9 1244.4,487.4 1092.1,594.3" fill="none" stroke="#e6e6e6" stroke-width="1.1"/>
<polygon points="1049.6,533.7 1222.7,426.9 1269.8,494 1103.5,593 1091,592.6" fill="#46676a" />
<polygon points="1076.6,535.6 1198.5,450 1230.7,495.8 1107,578.9" fill="#ffffff" />
<polygon points="1119,502.1 1132.1,492.9 1169.9,539.7 1149,536" fill="#b4b4b4" />
<polygon points="1131,491.3 1195.7,445.9 1230.7,495.8 1169.3,538.9" fill="#ffffff" />
<line x1="1178.7" y1="456.5" x2="1212.7" y2="508.4" stroke="#b0b0b0" stroke-width="1.6"/>
<circle cx="1114.6" cy="540.2" r="31.4" fill="#ada29e"/>
<circle cx="1128.6" cy="540.7" r="31.4" fill="#ffffff"/>
<polygon points="1056.7,529.9 1185.2,439.7 1189.3,445.5 1159.9,469.8 1153.5,481.6 1120.8,504.5 1111.5,500 1061.3,536.5" fill="#17383a" />
<polygon points="1061.3,536.5 1111.5,500 1120.8,504.5 1076.6,535.6" fill="#5f7d80" />
<polygon points="1153.5,481.6 1159.9,469.8 1189.3,445.5 1195.6,442.3 1198.5,450" fill="#5f7d80" />
<polygon points="1058.4,532.4 1076.6,535.6 1107,578.9 1105.1,591.9" fill="#5f7d80" />
<polygon points="1049.6,533.7 1058.4,532.4 1105.1,591.9 1092.3,592.9" fill="#17383a" />
<g transform="translate(1207.2 440.2) rotate(-35)"><rect x="-10" y="-8" width="20" height="17" fill="#5a7a7a"/><rect x="-7.5" y="-7.5" width="15" height="14" rx="3" fill="#22403f" fill-opacity="0.7"/></g>
<polyline points="1213.9,433.6 1225.2,427.1 1271.4,492.9" fill="none" stroke="#d8dce6" stroke-width="4" stroke-opacity="0.9"/>
<polyline points="1105.4,592.3 1270.1,494.5" fill="none" stroke="#a8bcb4" stroke-width="2"/>
<polygon points="1001.2,454.7 1161.9,352 1208.3,411.4 1207.3,409.7 1040.3,515.1 998.9,481.7" fill="#46676a" />
<polygon points="1009.6,467.2 1131.6,377.9 1173,430 1046.1,513.3" fill="#ffffff" />
<polygon points="1057.5,425.2 1067.7,418.4 1114.5,474.2 1098.7,482.8 1081.2,461.1" fill="#b4b4b4" />
<polygon points="1067.7,418.4 1088.3,405.2 1090.2,404.5 1102.2,396.9 1135.3,375.6 1178.2,428.8 1105.8,484.4" fill="#ffffff" />
<line x1="1115.7" y1="388.2" x2="1160.9" y2="441.5" stroke="#b0b0b0" stroke-width="1.6"/>
<circle cx="1057.5" cy="466" r="31.4" fill="#ada29e"/>
<circle cx="1067.5" cy="464.5" r="31.4" fill="#ffffff"/>
<polygon points="998.1,473.2 1009.6,467.2 1046.1,513.3 1038.5,515.6 998.9,481.7" fill="#5f7d80" />
<polygon points="998.9,481.7 1001.3,477.1 1038.5,515.6 1039.8,519.9" fill="#17383a" />
<polyline points="1045.1,514.3 1207.3,409.7" fill="none" stroke="#a8bcb4" stroke-width="2"/>
<g transform="translate(1151.4 377.6) rotate(-35.6)"><rect x="-11" y="-11" width="22" height="22" fill="#60807e"/><rect x="-7.5" y="-7.5" width="15" height="15" rx="2" fill="#4b6367"/></g>
<polyline points="1001.6,456 1161.9,353.4 1206.9,409.9" fill="none" stroke="#c8d4d6" stroke-width="2.6"/>
<polygon points="952.7,380.6 1110.2,276.3 1157.2,342.6 1156.1,342.4 994,452.4 950.8,409.6" fill="#46676a" />
<polygon points="965.6,400.5 1083.3,303.3 1124.1,360.1 998.1,445.8" fill="#ffffff" />
<polygon points="1008.5,351.9 1018.2,344.5 1065.2,406.5 1049.8,415.1 1032.1,390.9" fill="#b4b4b4" />
<polygon points="1018.2,344.5 1038.4,331.1 1040.9,331.3 1052.8,323.7 1086.8,301 1129.3,359 1056.9,414.5" fill="#ffffff" />
<line x1="1066" y1="315" x2="1110.7" y2="373.1" stroke="#b0b0b0" stroke-width="1.6"/>
<circle cx="1011.1" cy="399.3" r="31.4" fill="#ada29e"/>
<circle cx="1016.5" cy="391.9" r="31.4" fill="#ffffff"/>
<polygon points="953.1,404.8 965.6,400.5 998.1,445.8 991.9,452.3 950.8,409.6" fill="#5f7d80" />
<polygon points="950.8,409.6 953.1,404.8 991.9,452.3 991.9,457" fill="#17383a" />
<polygon points="998.1,445.8 1048.8,414.2 1129.3,362.3 1156.1,344.6 1158.1,346.2 994.4,453.2" fill="#5f7d80" />
<polygon points="1060.1,406.7 1156.1,344.1 1156.2,340.7 1129.3,359 1068.4,400" fill="#1b3a3c" />
<g transform="translate(1115.9 315.5) rotate(-35.6)"><rect x="-11" y="-11" width="22" height="22" fill="#60807e"/><rect x="-7.5" y="-7.5" width="15" height="15" rx="2" fill="#4b6367"/></g>
<g transform="translate(1136.4 343.8) rotate(-35.6)"><rect x="-11" y="-11" width="22" height="22" fill="#60807e"/><rect x="-7.5" y="-7.5" width="15" height="15" rx="2" fill="#4b6367"/></g>
<polyline points="953,381.9 1110.1,277.9 1155.8,340.9" fill="none" stroke="#c4d2d4" stroke-width="2.2"/>
<polygon points="906.6,305.6 1059.2,199.6 1107,270 1106,272 951,388 905.5,336" fill="#46676a" />
<polygon points="919.8,326.7 1041.8,239.4 1074.9,287.6 952.9,374.9" fill="#ffffff" />
<polygon points="966,284 972.8,272.8 1018,335 1003,343.7 985,318" fill="#b4b4b4" />
<polygon points="972.8,272.8 992.6,259.5 1000.2,267.1 1012.5,260.5 1045.4,237.2 1080,286.6 1010,340" fill="#ffffff" />
<line x1="1025.6" y1="252" x2="1062" y2="301" stroke="#b0b0b0" stroke-width="1.6"/>
<circle cx="961.4" cy="334.2" r="31.4" fill="#ada29e"/>
<circle cx="966.2" cy="320" r="31.4" fill="#ffffff"/>
<polygon points="907.6,331 919.8,326.7 952.9,374.9 948.6,387 905.5,336" fill="#5f7d80" />
<polygon points="905.5,336 907.6,331 948.6,387 947,392" fill="#17383a" />
<polygon points="952.9,374.9 1002,342.8 1080,290 1106,272 1108,276 951,388" fill="#5f7d80" />
<polygon points="1002,342.8 1106,271.5 1106,268 1080,286.6 1010,336" fill="#1b3a3c" />
<g transform="translate(1065.8 240.8) rotate(-35.6)"><rect x="-11" y="-11" width="22" height="22" fill="#60807e"/><rect x="-7.5" y="-7.5" width="15" height="15" rx="2" fill="#4b6367"/></g>
<g transform="translate(1086.6 270.8) rotate(-35.6)"><rect x="-11" y="-11" width="22" height="22" fill="#60807e"/><rect x="-7.5" y="-7.5" width="15" height="15" rx="2" fill="#4b6367"/></g>
<polyline points="907,307 1059.2,201.2 1105.6,268.2" fill="none" stroke="#c4d2d4" stroke-width="2.2"/>
<polygon points="1091,287 1104.5,275.5 1101,281" fill="#fcf9bb"/>
<polygon points="1185,439 1212,428.5 1207,421" fill="#fcf9bb"/>
<text transform="translate(1150 365) rotate(-35.6)" font-size="7" fill="#f2f2f2" stroke="#f2f2f2" stroke-width="0.45" text-anchor="middle" font-family="Liberation Sans">Mdroit2</text>
<text transform="translate(1198 438) rotate(-35.6)" font-size="7" fill="#f2f2f2" stroke="#f2f2f2" stroke-width="0.45" text-anchor="middle" font-family="Liberation Sans">Mdroit4</text>
<text transform="translate(634.6 547.1) rotate(-35.6)" font-size="10" fill="#f2f2f2" stroke="#f2f2f2" stroke-width="0.45" text-anchor="middle" font-family="Liberation Sans">AVG1</text>
<text transform="translate(696.6 578.1) rotate(-35.6)" font-size="10" fill="#f2f2f2" stroke="#f2f2f2" stroke-width="0.45" text-anchor="middle" font-family="Liberation Sans">R5</text>
<text transform="translate(707 639) rotate(54.4)" font-size="10" fill="#f2f2f2" stroke="#f2f2f2" stroke-width="0.45" text-anchor="middle" font-family="Liberation Sans">C1</text>
<text transform="translate(687 655.5) rotate(54.4)" font-size="10" fill="#f2f2f2" stroke="#f2f2f2" stroke-width="0.45" text-anchor="middle" font-family="Liberation Sans">R6</text>
<text transform="translate(705.4 479.4) rotate(-35.6)" font-size="10" fill="#f2f2f2" stroke="#f2f2f2" stroke-width="0.45" text-anchor="middle" font-family="Liberation Sans">R1</text>
<text transform="translate(847 440.5) rotate(-35.6)" font-size="10" fill="#f2f2f2" stroke="#f2f2f2" stroke-width="0.45" text-anchor="middle" font-family="Liberation Sans">VCC2</text>
<text transform="translate(886.3 426.5) rotate(-35.6)" font-size="10" fill="#f2f2f2" stroke="#f2f2f2" stroke-width="0.45" text-anchor="middle" font-family="Liberation Sans">Q1</text>
<text transform="translate(924.7 417.7) rotate(234.4)" font-size="10" fill="#f2f2f2" stroke="#f2f2f2" stroke-width="0.45" text-anchor="middle" font-family="Liberation Sans">D1</text>
<text transform="translate(931.7 489.3) rotate(-35.6)" font-size="10" fill="#f2f2f2" stroke="#f2f2f2" stroke-width="0.45" text-anchor="middle" font-family="Liberation Sans">Q2</text>
<text transform="translate(950 456.1) rotate(234.4)" font-size="10" fill="#f2f2f2" stroke="#f2f2f2" stroke-width="0.45" text-anchor="middle" font-family="Liberation Sans">D2</text>
<text transform="translate(821.8 512.2) rotate(-35.6)" font-size="10" fill="#f2f2f2" stroke="#f2f2f2" stroke-width="0.45" text-anchor="middle" font-family="Liberation Sans">R8</text>
<text transform="translate(843.1 500) rotate(-35.6)" font-size="10" fill="#f2f2f2" stroke="#f2f2f2" stroke-width="0.45" text-anchor="middle" font-family="Liberation Sans">R10</text>
<text transform="translate(866.5 532.5) rotate(-35.6)" font-size="10" fill="#f2f2f2" stroke="#f2f2f2" stroke-width="0.45" text-anchor="middle" font-family="Liberation Sans">U2</text>
<text transform="translate(782 581.4) rotate(-35.6)" font-size="10" fill="#f2f2f2" stroke="#f2f2f2" stroke-width="0.45" text-anchor="middle" font-family="Liberation Sans">R7R2</text>
<text transform="translate(809.5 611.9) rotate(-35.6)" font-size="10" fill="#f2f2f2" stroke="#f2f2f2" stroke-width="0.45" text-anchor="middle" font-family="Liberation Sans">R11</text>
<text transform="translate(824.8 634.3) rotate(-35.6)" font-size="10" fill="#f2f2f2" stroke="#f2f2f2" stroke-width="0.45" text-anchor="middle" font-family="Liberation Sans">R3</text>
<text transform="translate(905.9 577.4) rotate(-35.6)" font-size="10" fill="#f2f2f2" stroke="#f2f2f2" stroke-width="0.45" text-anchor="middle" font-family="Liberation Sans">U3</text>
<text transform="translate(886.7 639.2) rotate(-35.6)" font-size="10" fill="#f2f2f2" stroke="#f2f2f2" stroke-width="0.45" text-anchor="middle" font-family="Liberation Sans">J1</text>
<text transform="translate(751.3 713.8) rotate(-35.6)" font-size="10" fill="#f2f2f2" stroke="#f2f2f2" stroke-width="0.45" text-anchor="middle" font-family="Liberation Sans">AVD1</text>
<text transform="translate(795 763.9) rotate(-35.6)" font-size="10" fill="#f2f2f2" stroke="#f2f2f2" stroke-width="0.45" text-anchor="middle" font-family="Liberation Sans">ARD1</text>
<text transform="translate(865.4 694.6) rotate(-35.6)" font-size="10" fill="#f2f2f2" stroke="#f2f2f2" stroke-width="0.45" text-anchor="middle" font-family="Liberation Sans">R4</text>
<text transform="translate(909 705.3) rotate(-35.6)" font-size="10" fill="#f2f2f2" stroke="#f2f2f2" stroke-width="0.45" text-anchor="middle" font-family="Liberation Sans">MC2</text>
<text transform="translate(946 698.5) rotate(-35.6)" font-size="10" fill="#f2f2f2" stroke="#f2f2f2" stroke-width="0.45" text-anchor="middle" font-family="Liberation Sans">MC1</text>
<text transform="translate(946.5 637) rotate(-35.6)" font-size="10" fill="#f2f2f2" stroke="#f2f2f2" stroke-width="0.45" text-anchor="middle" font-family="Liberation Sans">U4</text>
<text transform="translate(1028.7 650.2) rotate(-35.6)" font-size="10" fill="#f2f2f2" stroke="#f2f2f2" stroke-width="0.45" text-anchor="middle" font-family="Liberation Sans">R12</text>
<text transform="translate(996 628.5) rotate(54.4)" font-size="10" fill="#f2f2f2" stroke="#f2f2f2" stroke-width="0.45" text-anchor="middle" font-family="Liberation Sans">Q4</text>
<text transform="translate(1052 593.5) rotate(234.4)" font-size="10" fill="#f2f2f2" stroke="#f2f2f2" stroke-width="0.45" text-anchor="middle" font-family="Liberation Sans">D4</text>
<text transform="translate(1001 552.5) rotate(-35.6)" font-size="10" fill="#f2f2f2" stroke="#f2f2f2" stroke-width="0.45" text-anchor="middle" font-family="Liberation Sans">D3</text>
<text transform="translate(1003 561.5) rotate(-35.6)" font-size="10" fill="#f2f2f2" stroke="#f2f2f2" stroke-width="0.45" text-anchor="middle" font-family="Liberation Sans">VCC1</text>
<text transform="translate(969 543.5) rotate(-35.6)" font-size="10" fill="#f2f2f2" stroke="#f2f2f2" stroke-width="0.45" text-anchor="middle" font-family="Liberation Sans">Q3</text>
<text transform="translate(1106 495.5) rotate(-35.6)" font-size="10" fill="#f2f2f2" stroke="#f2f2f2" stroke-width="0.45" text-anchor="middle" font-family="Liberation Sans">K4</text>
<text transform="translate(1055 420.5) rotate(-35.6)" font-size="10" fill="#f2f2f2" stroke="#f2f2f2" stroke-width="0.45" text-anchor="middle" font-family="Liberation Sans">K3</text>
<defs><linearGradient id="gz1" x1="0" y1="0" x2="1" y2="0"><stop offset="0" stop-color="#22ff22"/><stop offset="0.55" stop-color="#10e010"/><stop offset="1" stop-color="#0a9a0a"/></linearGradient><linearGradient id="gz2" x1="0" y1="0" x2="0" y2="1"><stop offset="0" stop-color="#ff2020"/><stop offset="0.6" stop-color="#f00000"/><stop offset="1" stop-color="#a00000"/></linearGradient><radialGradient id="gz3" cx="0.5" cy="0.55" r="0.5"><stop offset="0" stop-color="#0000a0"/><stop offset="1" stop-color="#0000b0"/></radialGradient></defs>
<path d="M47.5 929 L29.6 906.6" stroke="#10e010" stroke-width="8.5"/>
<path d="M44 926 L27 905" stroke="#30ff30" stroke-width="2" stroke-opacity="0.6"/>
<polygon points="17,887.9 39.6,900.2 21.2,913" fill="url(#gz1)"/>
<path d="M21.2 913 Q30 903 39.6 900.2" stroke="#064a06" stroke-width="1.3" fill="none"/>
<path d="M47.5 929 L68 913.6" stroke="#f01010" stroke-width="8.5"/>
<path d="M50 925 L66 912" stroke="#ff4040" stroke-width="2" stroke-opacity="0.5"/>
<polygon points="86.7,900.5 62.6,904.8 74.8,922.5" fill="url(#gz2)"/>
<path d="M62.6 904.8 Q66 916 74.8 922.5" stroke="#600000" stroke-width="1.3" fill="none"/>
<circle cx="47.5" cy="929.3" r="14" fill="url(#gz3)"/>
</svg><!--/PCB-->
<div class="abs" id="sb">
<div class="abs" style="left:-18px;top:6px;white-space:nowrap">Dernier temps de rendu 0 ms</div>
<div class="ssep" style="left:1425px"></div>
<div class="ssep" style="left:1605px"></div>
<div class="abs" style="left:1611px;top:6px;transform:scaleX(0.92);transform-origin:0 0">dx 0,00</div>
<div class="ssep" style="left:1745px"></div>
<div class="abs" style="left:1751px;top:6px;transform:scaleX(0.92);transform-origin:0 0">dy 0,00</div>
<div class="ssep" style="left:1903px"></div>
</div>
</body></html>
